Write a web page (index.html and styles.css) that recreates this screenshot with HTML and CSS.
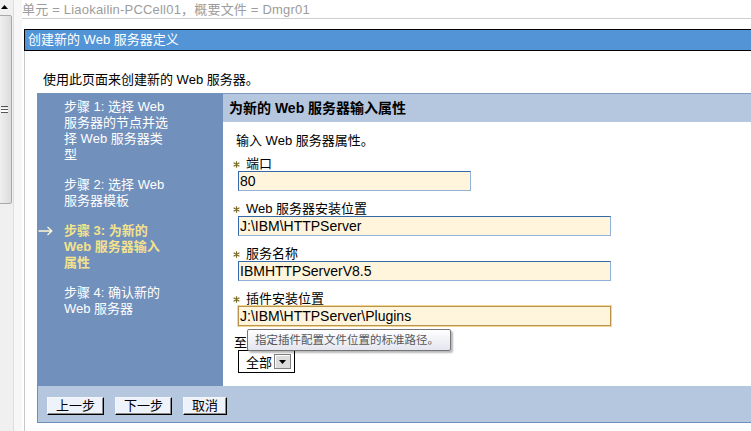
FILE: index.html
```html
<!DOCTYPE html>
<html lang="zh">
<head>
<meta charset="utf-8">
<title>创建新的 Web 服务器定义</title>
<link rel="stylesheet" href="styles.css">
</head>
<body>
<div class="page">
  <div class="leftframe">
    <div class="sb">
      <div class="sb-up"><svg width="7" height="4" viewBox="0 0 7 4"><path d="M0 4 L3.5 0 L7 4 Z" fill="#000"/></svg></div>
      <div class="sb-thumb"><div class="grip"></div></div>
    </div>
  </div>
  <div class="gutter"></div>
  <div class="main">
    <div class="crumb">单元 = Liaokailin-PCCell01，概要文件 = Dmgr01</div>
    <div class="panel">
      <div class="titlebar">创建新的 Web 服务器定义</div>
      <p class="intro">使用此页面来创建新的 Web 服务器。</p>
      <div class="wizard">
        <div class="steps">
          <div class="step"><span class="mark"></span><span class="txt">步骤 1: 选择 Web 服务器的节点并选择 Web 服务器类型</span></div>
          <div class="step"><span class="mark"></span><span class="txt">步骤 2: 选择 Web 服务器模板</span></div>
          <div class="step current"><span class="mark"><svg width="15" height="10" viewBox="0 0 15 10"><path d="M0.5 5 H13.5 M9.5 1 L13.8 5 L9.5 9" fill="none" stroke="#fff8d2" stroke-width="1.3"/></svg></span><span class="txt">步骤 3: 为新的 Web 服务器输入属性</span></div>
          <div class="step"><span class="mark"></span><span class="txt">步骤 4: 确认新的 Web 服务器</span></div>
        </div>
        <div class="content">
          <div class="content-head">为新的 Web 服务器输入属性</div>
          <div class="form">
            <div class="desc">输入 Web 服务器属性。</div>
            <div class="field">
              <div class="label"><span class="req"><svg width="7" height="7" viewBox="0 0 7 7"><path d="M3.5 0.3 V6.7 M0.6 1.8 L6.4 5.2 M0.6 5.2 L6.4 1.8" stroke="#7a6a22" stroke-width="1.2"/></svg></span>端口</div>
              <input class="inp short" type="text" value="80">
            </div>
            <div class="field">
              <div class="label"><span class="req"><svg width="7" height="7" viewBox="0 0 7 7"><path d="M3.5 0.3 V6.7 M0.6 1.8 L6.4 5.2 M0.6 5.2 L6.4 1.8" stroke="#7a6a22" stroke-width="1.2"/></svg></span>Web 服务器安装位置</div>
              <input class="inp" type="text" value="J:\IBM\HTTPServer">
            </div>
            <div class="field">
              <div class="label"><span class="req"><svg width="7" height="7" viewBox="0 0 7 7"><path d="M3.5 0.3 V6.7 M0.6 1.8 L6.4 5.2 M0.6 5.2 L6.4 1.8" stroke="#7a6a22" stroke-width="1.2"/></svg></span>服务名称</div>
              <input class="inp" type="text" value="IBMHTTPServerV8.5">
            </div>
            <div class="field tipfield">
              <div class="label"><span class="req"><svg width="7" height="7" viewBox="0 0 7 7"><path d="M3.5 0.3 V6.7 M0.6 1.8 L6.4 5.2 M0.6 5.2 L6.4 1.8" stroke="#7a6a22" stroke-width="1.2"/></svg></span>插件安装位置</div>
              <input class="inp focus" type="text" value="J:\IBM\HTTPServer\Plugins">
              <div class="tooltip">指定插件配置文件位置的标准路径。</div>
            </div>
            <div class="field last">
              <div class="label plain">至</div>
              <div class="select"><span>全部</span><span class="drop"><svg width="7" height="4" viewBox="0 0 7 4"><path d="M0 0 L7 0 L3.5 4 Z" fill="#000"/></svg></span></div>
            </div>
          </div>
        </div>
        <div class="buttonbar">
          <button class="btn" type="button">上一步</button>
          <button class="btn" type="button">下一步</button>
          <button class="btn" type="button">取消</button>
        </div>
      </div>
    </div>
  </div>
</div>
</body>
</html>
```
FILE: styles.css
```css
html, body {
  margin: 0;
  padding: 0;
  background: #ffffff;
}
body {
  font-family: "Liberation Sans", "Noto Sans CJK SC", sans-serif;
  font-size: 13px;
  color: #000;
}
.page {
  display: flex;
  width: 751px;
  height: 431px;
  overflow: hidden;
}
.leftframe {
  width: 13px;
  flex: none;
  background: #f0f0f0;
  border-right: 1px solid #dedede;
  overflow: hidden;
}
.sb {
  width: 17px;
  margin-left: -4px;
  display: flex;
  flex-direction: column;
  align-items: center;
}
.sb-up {
  height: 14px;
  display: flex;
  align-items: center;
  justify-content: center;
  width: 17px;
}
.sb-thumb {
  width: 15px;
  height: 189px;
  margin-top: 1px;
  box-sizing: border-box;
  border: 1px solid #a9a9a9;
  border-radius: 2px;
  background: linear-gradient(to right, #f2f2f2, #dcdcdc);
  display: flex;
  align-items: center;
  justify-content: center;
}
.grip {
  width: 7px;
  height: 5px;
  border-top: 1px solid #555;
  border-bottom: 1px solid #555;
  background: linear-gradient(#fff 0 1px, #555 1px 2px, #fff 2px);
  background-size: 100% 100%;
  background-position: 0 1px;
  background-repeat: no-repeat;
}
.gutter {
  width: 8px;
  flex: none;
  background: #f7f7f7;
}
.main {
  flex: 1;
  min-width: 0;
  background: #fff;
  display: flex;
  flex-direction: column;
}
.crumb {
  height: 18px;
  line-height: 20px;
  border-bottom: 1px solid #cfcfcf;
  color: #9c9c9c;
  white-space: nowrap;
  font-size: 13px;
  letter-spacing: 0.2px;
}
.panel {
  margin-top: 10px;
  margin-left: 2px;
  border-left: 1px solid #c8c8c8;
  flex: 1;
}
.titlebar {
  margin-left: -1px;
  height: 20px;
  border: 1px solid #000;
  border-right: none;
  background: #5294d6;
  color: #fff;
  line-height: 20px;
  padding-left: 3px;
  white-space: nowrap;
}
.intro {
  margin: 21px 0 5px 0;
  padding-left: 18px;
  line-height: 16px;
  height: 16px;
}
.wizard {
  margin-left: 12px;
  display: grid;
  grid-template-columns: 186px 1fr;
  grid-template-rows: 293px 37px;
}
.steps {
  background: #7190bc;
  padding-top: 6px;
}
.step {
  display: flex;
  margin-bottom: 14px;
  color: #fff;
  line-height: 16px;
}
.mark {
  width: 27px;
  flex: none;
  padding-left: 1px;
  padding-top: 3px;
  box-sizing: border-box;
}
.mark svg {
  display: block;
}
.txt {
  width: 108px;
}
.step.current .txt {
  color: #f3e38c;
  font-weight: bold;
}
.content {
  overflow: hidden;
}
.content-head {
  height: 28px;
  border-top: 1px solid #8398bd;
  background: #b5c6df;
  padding-left: 6px;
  line-height: 29px;
  font-size: 14px;
  font-weight: bold;
  white-space: nowrap;
}
.form {
  padding-left: 10px;
}
.desc {
  margin-top: 11px;
  padding-left: 3px;
  line-height: 16px;
}
.field {
  margin-top: 8px;
}
.field + .field {
  margin-top: 11px;
}
.field.last {
  margin-top: 10px;
}
.tipfield {
  position: relative;
}
.label {
  display: flex;
  align-items: center;
  line-height: 14px;
  height: 14px;
  white-space: nowrap;
}
.req {
  width: 13px;
  flex: none;
  display: flex;
  align-items: center;
  padding-top: 1px;
}
.inp {
  display: block;
  margin: 0 0 0 5px;
  width: 373px;
  height: 20px;
  box-sizing: border-box;
  border: 1px solid;
  border-color: #356aa6 #93b1d8 #93b1d8 #356aa6;
  background: #fff5dd;
  font-family: "Liberation Sans", "Noto Sans CJK SC", sans-serif;
  font-size: 14px;
  color: #000;
  padding: 0 1px;
  outline: none;
}
.inp.short {
  width: 233px;
}
.inp.focus {
  border: 1px solid #b9944a;
  box-shadow: 0 0 0 1px #f1d596;
}
.tooltip {
  position: absolute;
  left: 14px;
  top: 37px;
  width: 204px;
  height: 22px;
  box-sizing: border-box;
  border: 1px solid #767676;
  border-radius: 2px;
  background: linear-gradient(#ffffff, #e4e5ef);
  box-shadow: 2px 2px 2px rgba(0, 0, 0, 0.28);
  color: #575757;
  font-size: 11.5px;
  line-height: 20px;
  padding-left: 7px;
  white-space: nowrap;
}
.label.plain {
  padding-left: 1px;
}
.select {
  margin: 0 0 0 5px;
  width: 57px;
  height: 23px;
  box-sizing: border-box;
  border: 1px solid #000;
  background: #fff;
  display: flex;
  align-items: center;
  padding-left: 7px;
}
.drop {
  margin-left: auto;
  margin-right: 3px;
  width: 17px;
  height: 15px;
  box-sizing: border-box;
  border: 1px solid #808080;
  box-shadow: inset 1px 1px 0 #fff;
  background: #dcdcdc;
  display: flex;
  align-items: center;
  justify-content: center;
}
.buttonbar {
  grid-column: 1 / -1;
  background: #b5c6df;
  border-left: 1px solid #6f8fbf;
  border-bottom: 1px solid #6f8fbf;
  display: flex;
  align-items: flex-start;
  gap: 11px;
  padding: 11px 0 0 9px;
}
.btn {
  height: 18px;
  margin: 0;
  padding: 0 8px;
  box-sizing: border-box;
  font-family: "Liberation Sans", "Noto Sans CJK SC", sans-serif;
  font-size: 13px;
  line-height: 14px;
  color: #000;
  background: #edf2fb;
  border: 1px solid;
  border-color: #f4f6fa #000 #000 #f4f6fa;
  box-shadow: inset -1px -1px 0 #8a8a8a;
  border-radius: 0;
}
```
